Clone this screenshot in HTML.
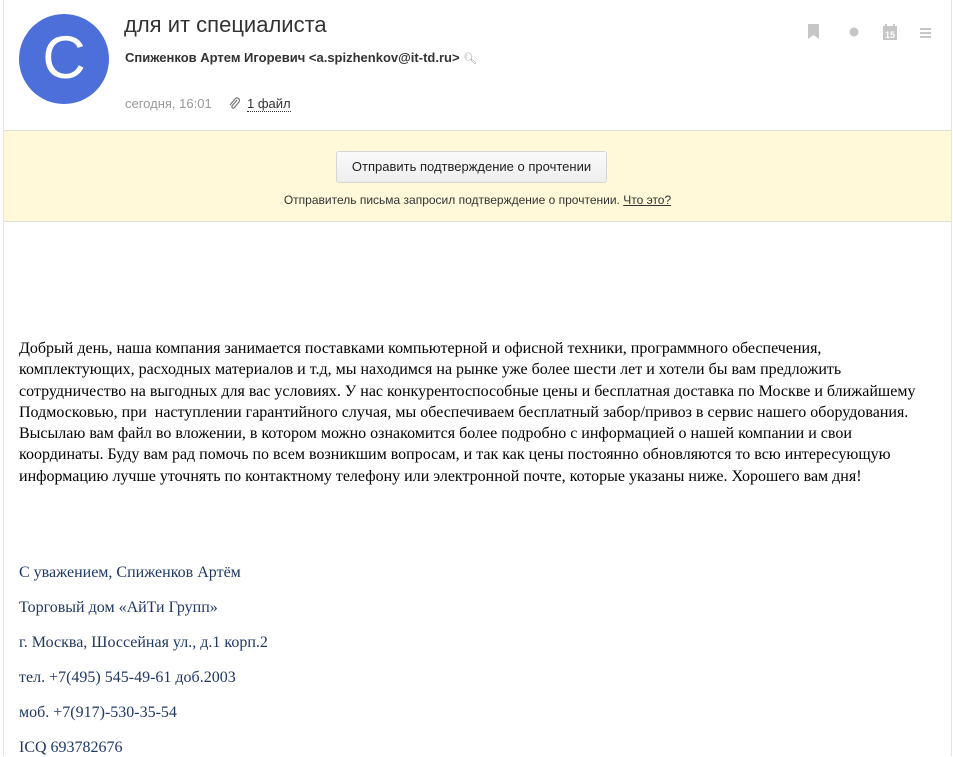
<!DOCTYPE html>
<html><head><meta charset="utf-8"><style>
*{margin:0;padding:0;box-sizing:border-box}
body{width:953px;height:756px;overflow:hidden;background:#fff;font-family:"Liberation Sans",Arial,sans-serif;position:relative}
.frame{position:absolute;left:3px;top:0;width:949px;height:756px;border-left:1px solid #e4e4e4;border-right:1px solid #e4e4e4}
.av{position:absolute;left:19px;top:14px;width:90px;height:90px;border-radius:50%;background:#4c6fd9;color:#fff;font-size:60px;text-align:center;line-height:88px}
.t{position:absolute;left:124px;top:12px;font-size:22px;color:#333}
.s{position:absolute;left:125px;top:50px;font-size:13px;font-weight:bold;color:#333}
.d{position:absolute;left:125px;top:96px;font-size:13px;color:#999}
.f{position:absolute;left:247px;top:96px;font-size:13px;color:#333;border-bottom:1px dotted #333;line-height:15px}
.banner{position:absolute;left:4px;top:130px;width:947px;height:92px;border-top:1px solid #ddd;border-bottom:1px solid #ddd;background:#fff8d9}
.btn{position:absolute;left:332px;top:20px;width:271px;height:32px;border:1px solid #d6d6d6;border-radius:3px;background:linear-gradient(#fafafa,#eee);font-size:13px;color:#222;text-align:center;line-height:30px}
.note{position:absolute;left:0;width:100%;top:62px;text-align:center;font-size:12px;color:#333}
.note u{color:#333}
.body{position:absolute;left:19px;top:338px;width:930px;font-family:"Liberation Serif","Times New Roman",serif;font-size:16px;line-height:21.3px;color:#000;white-space:nowrap}
.sig{position:absolute;left:19px;font-family:"Liberation Serif",serif;font-size:16px;color:#1f3864}
.ic{position:absolute;fill:#c6c6c6}
</style></head><body>
<div class="frame"></div>
<div class="av">C</div>
<div class="t">для ит специалиста</div>
<div class="s">Спиженков Артем Игоревич &lt;a.spizhenkov@it-td.ru&gt; <span style="color:#999;font-weight:normal;font-size:11px">&#x1F50D;&#xFE0E;</span></div>
<div class="d">сегодня, 16:01</div>
<svg style="position:absolute;left:228px;top:97px" width="13" height="13" viewBox="0 0 13 13"><path d="M9 3 L4 9 a1.5 1.5 0 0 0 2 2 L11 5 a2.5 2.5 0 0 0 -4 -3 L2 8" fill="none" stroke="#777" stroke-width="1.2"/></svg>
<div class="f">1 файл</div>
<svg class="ic" style="left:808px;top:24px" width="12" height="16"><path d="M0 0H11V15L5.5 11L0 15Z"/></svg>
<svg class="ic" style="left:849px;top:27px" width="10" height="10"><circle cx="5" cy="5" r="4.5"/></svg>
<svg class="ic" style="left:883px;top:24px" width="15" height="16"><rect x="0" y="2" width="14" height="14"/><rect x="2" y="0" width="2" height="4"/><rect x="10" y="0" width="2" height="4"/><text x="7" y="14" font-size="9" font-family="Liberation Sans" fill="#fff" text-anchor="middle" font-weight="bold">15</text></svg>
<svg class="ic" style="left:920px;top:28px" width="11" height="10"><rect y="0" width="11" height="2"/><rect y="4" width="11" height="2"/><rect y="8" width="11" height="2"/></svg>
<div class="banner"><div class="btn">Отправить подтверждение о прочтении</div><div class="note">Отправитель письма запросил подтверждение о прочтении. <u>Что это?</u></div></div>
<div class="body">Добрый день, наша компания занимается поставками компьютерной и офисной техники, программного обеспечения,<br>комплектующих, расходных материалов и т.д, мы находимся на рынке уже более шести лет и хотели бы вам предложить<br>сотрудничество на выгодных для вас условиях. У нас конкурентоспособные цены и бесплатная доставка по Москве и ближайшему<br>Подмосковью, при&nbsp; наступлении гарантийного случая, мы обеспечиваем бесплатный забор/привоз в сервис нашего оборудования.<br>Высылаю вам файл во вложении, в котором можно ознакомится более подробно с информацией о нашей компании и свои<br>координаты. Буду вам рад помочь по всем возникшим вопросам, и так как цены постоянно обновляются то всю интересующую<br>информацию лучше уточнять по контактному телефону или электронной почте, которые указаны ниже. Хорошего вам дня!</div>
<div class="sig" style="top:564px">С уважением, Спиженков Артём</div>
<div class="sig" style="top:599px">Торговый дом «АйТи Групп»</div>
<div class="sig" style="top:634px">г. Москва, Шоссейная ул., д.1 корп.2</div>
<div class="sig" style="top:669px">тел. +7(495) 545-49-61 доб.2003</div>
<div class="sig" style="top:704px">моб. +7(917)-530-35-54</div>
<div class="sig" style="top:739px">ICQ 693782676</div>
</body></html>
